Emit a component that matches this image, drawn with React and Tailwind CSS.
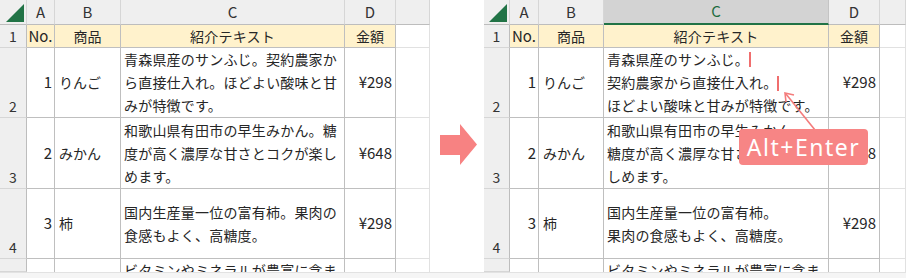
import React from "react";

const FONT = "font-['Noto_Sans_CJK_JP','Noto_Sans',sans-serif]";

const leftRows = [
  { n: "1", b: "りんご", c: ["青森県産のサンふじ。契約農家か", "ら直接仕入れ。ほどよい酸味と甘", "みが特徴です。"], d: "¥298", rowCls: "" },
  { n: "2", b: "みかん", c: ["和歌山県有田市の早生みかん。糖", "度が高く濃厚な甘さとコクが楽し", "めます。"], d: "¥648" },
  { n: "3", b: "柿", c: ["国内生産量一位の富有柿。果肉の", "食感もよく、高糖度。"], d: "¥298" },
];

const rightRows = [
  { n: "1", b: "りんご", c: ["青森県産のサンふじ。", "契約農家から直接仕入れ。", "ほどよい酸味と甘みが特徴です。"], d: "¥298" },
  { n: "2", b: "みかん", c: ["和歌山県有田市の早生みかん。", "糖度が高く濃厚な甘さとコクが楽", "しめます。"], d: "¥648" },
  { n: "3", b: "柿", c: ["国内生産量一位の富有柿。", "果肉の食感もよく、高糖度。"], d: "¥298" },
];

function Corner() {
  return (
    <div className="bg-[#efefef] border-r border-b border-r-[#d6d6d6] border-b-[#bdbdbd] flex items-end justify-end pr-[2px] pb-[2px]">
      <svg width="18" height="18" viewBox="0 0 18 18">
        <polygon points="18,0 18,18 0,18" fill="#217346" />
      </svg>
    </div>
  );
}

function ColHead({ label, selected }) {
  if (selected) {
    return (
      <div className="bg-[#d3d3d3] border-r border-r-[#c4c4c4] border-b-2 border-b-[#217346] flex items-center justify-center text-[15px] text-[#1e6b40]">
        {label}
      </div>
    );
  }
  return (
    <div className="bg-[#efefef] border-r border-b border-r-[#d6d6d6] border-b-[#bdbdbd] flex items-center justify-center text-[15px] text-[#333333]">
      {label}
    </div>
  );
}

function RowHead({ label, center }) {
  return (
    <div
      className={
        "bg-[#efefef] border-r border-b border-r-[#bdbdbd] border-b-[#d6d6d6] flex justify-center text-[14px] text-[#333333] leading-[20px] " +
        (center ? "items-center" : "items-end pb-[1px]")
      }
    >
      {label}
    </div>
  );
}

function Sheet({ rows, gridCls, selectedC }) {
  return (
    <div className={"grid h-[272px] overflow-hidden " + gridCls}>
      <Corner />
      <ColHead label="A" />
      <ColHead label="B" />
      <ColHead label="C" selected={selectedC} />
      <ColHead label="D" />
      <div className="bg-[#efefef] border-b border-b-[#bdbdbd] border-r border-r-[#d6d6d6]" />

      <RowHead label="1" center />
      <div className="bg-[#fff2cc] border-r border-b border-[#bfbfbf] flex items-center justify-center text-[15px] text-[#262626]">No.</div>
      <div className="bg-[#fff2cc] border-r border-b border-[#bfbfbf] flex items-center justify-center text-[14px] text-[#262626]">商品</div>
      <div className="bg-[#fff2cc] border-r border-b border-[#bfbfbf] flex items-center justify-center text-[14px] tracking-[0.2px] text-[#262626]">紹介テキスト</div>
      <div className="bg-[#fff2cc] border-r border-b border-[#bfbfbf] flex items-center justify-center text-[14px] text-[#262626]">金額</div>
      <div className="bg-white border-r border-b border-[#e1e1e1]" />

      {rows.map((r, i) => (
        <React.Fragment key={i}>
          <RowHead label={String(i + 2)} />
          <div className="bg-white border-r border-b border-[#bfbfbf] flex items-center justify-end pr-[2px] text-[15px] text-[#262626]">{r.n}</div>
          <div className="bg-white border-r border-b border-[#bfbfbf] flex items-center pl-[4px] text-[14px] text-[#262626]">{r.b}</div>
          <div className="bg-white border-r border-b border-[#bfbfbf] flex flex-col justify-center pl-[3px] text-[14px] leading-[23px] tracking-[0.2px] text-[#262626] whitespace-nowrap overflow-hidden">
            {r.c.map((line, j) => (
              <div key={j}>{line}</div>
            ))}
          </div>
          <div className="bg-white border-r border-b border-[#bfbfbf] flex items-center justify-end pr-[3px] text-[15px] text-[#262626]">{r.d}</div>
          <div className="bg-white border-r border-b border-[#e1e1e1]" />
        </React.Fragment>
      ))}

      <RowHead label="" />
      <div className="bg-white border-r border-[#bfbfbf]" />
      <div className="bg-white border-r border-[#bfbfbf]" />
      <div className="bg-white border-r border-[#bfbfbf] pl-[3px] text-[14px] leading-[23px] tracking-[0.2px] text-[#262626] whitespace-nowrap overflow-hidden">
        ビタミンやミネラルが豊富に含ま
      </div>
      <div className="bg-white border-r border-[#bfbfbf]" />
      <div className="bg-white border-r border-[#e1e1e1]" />
    </div>
  );
}

export default function App() {
  return (
    <div className={"relative w-[906px] h-[278px] bg-white overflow-hidden " + FONT}>
      <div className="flex flex-col h-full">
        <div className="flex h-[272px]">
          <div className="w-[430px] shrink-0">
            <Sheet rows={leftRows} gridCls="grid-cols-[27px_28px_66px_224px_51px_1fr] grid-rows-[25px_23px_70px_71px_70px_1fr]" />
          </div>
          <div className="w-[54px] shrink-0 pt-[124px] pl-[10px]">
            <svg width="37" height="41" viewBox="0 0 37 41">
              <polygon points="0,11 20,11 20,0 37,20.5 20,41 20,31 0,31" fill="#f78282" />
            </svg>
          </div>
          <div className="w-[422px] shrink-0">
            <Sheet rows={rightRows} selectedC gridCls="grid-cols-[26px_29px_65px_225px_51px_1fr] grid-rows-[25px_23px_70px_71px_70px_1fr]" />
          </div>
        </div>
        <div className="h-[6px] bg-[#f5f5f5] border-t border-[#e2e2e2]" />
      </div>

      {/* cursor marks */}
      <div className="absolute left-[749px] top-[52px] w-[2px] h-[15px] bg-[#f06e6e]" />
      <div className="absolute left-[777px] top-[76px] w-[2px] h-[15px] bg-[#f06e6e]" />

      {/* pointer line */}
      <svg className="absolute left-0 top-0 pointer-events-none" width="906" height="278">
        <line x1="815" y1="130" x2="786" y2="94" stroke="#f47c7c" strokeWidth="1.6" />
        <polyline points="786,102 785,93 794,95" fill="none" stroke="#f47c7c" strokeWidth="1.6" />
      </svg>

      {/* badge */}
      <div className="absolute left-[739px] top-[129px] w-[129px] h-[36px] rounded-[4px] bg-[#f78585] flex items-center justify-center text-white text-[23px] tracking-[1.5px] font-['Noto_Sans',sans-serif]">
        Alt+Enter
      </div>
    </div>
  );
}
